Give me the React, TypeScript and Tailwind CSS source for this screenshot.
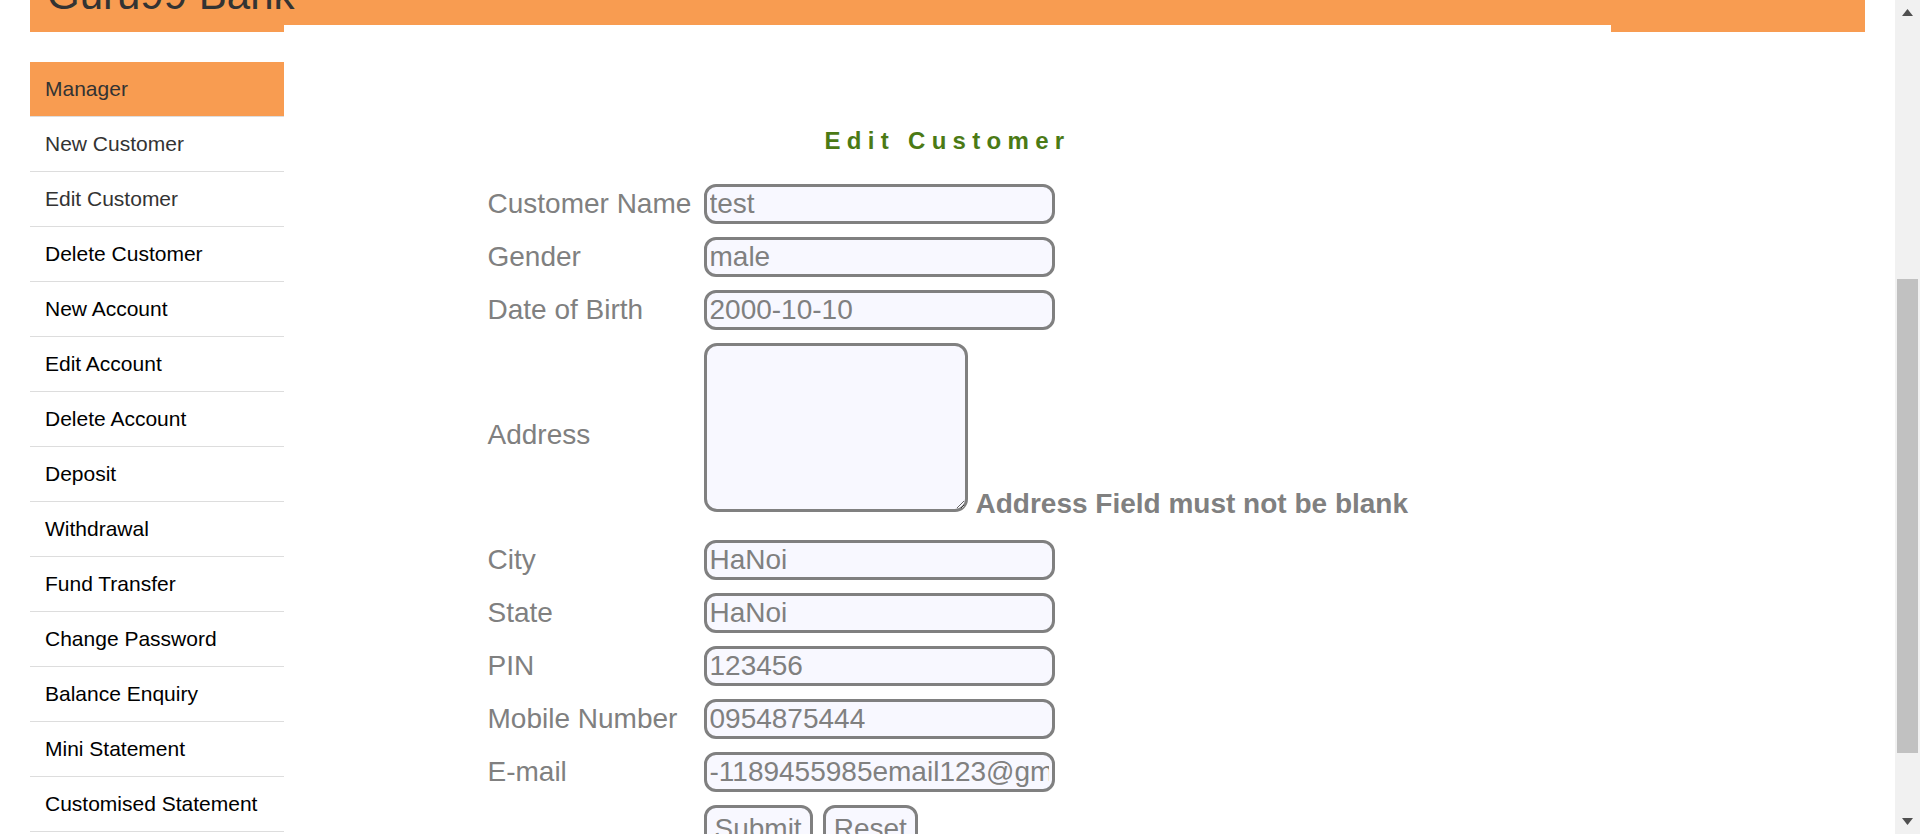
import React from "react";

const menu: { label: string; color: string }[] = [
  { label: "New Customer", color: "text-[#333333]" },
  { label: "Edit Customer", color: "text-[#333333]" },
  { label: "Delete Customer", color: "text-[#000000]" },
  { label: "New Account", color: "text-[#000000]" },
  { label: "Edit Account", color: "text-[#000000]" },
  { label: "Delete Account", color: "text-[#000000]" },
  { label: "Deposit", color: "text-[#000000]" },
  { label: "Withdrawal", color: "text-[#000000]" },
  { label: "Fund Transfer", color: "text-[#000000]" },
  { label: "Change Password", color: "text-[#000000]" },
  { label: "Balance Enquiry", color: "text-[#000000]" },
  { label: "Mini Statement", color: "text-[#000000]" },
  { label: "Customised Statement", color: "text-[#000000]" },
  { label: "Log out", color: "text-[#000000]" },
];

const fields: { label: string; value: string }[] = [
  { label: "Customer Name", value: "test" },
  { label: "Gender", value: "male" },
  { label: "Date of Birth", value: "2000-10-10" },
];

const fields2: { label: string; value: string }[] = [
  { label: "City", value: "HaNoi" },
  { label: "State", value: "HaNoi" },
  { label: "PIN", value: "123456" },
  { label: "Mobile Number", value: "0954875444" },
  { label: "E-mail", value: "-1189455985email123@gmail.com" },
];

const inputCls =
  "h-[40px] w-[351px] shrink-0 border-[3px] border-[#808080] rounded-[12px] bg-[#f8f8ff] px-[3px] text-[28px] leading-normal text-[#808080] outline-none font-['Liberation_Sans',Arial,sans-serif]";

function Row({ label, value }: { label: string; value: string }) {
  return (
    <div className="flex h-[40px]">
      <div className="w-[216px] shrink-0 flex items-center text-[28px] text-[#808080]">{label}</div>
      <input className={inputCls} defaultValue={value} />
    </div>
  );
}

export default function App() {
  return (
    <div className="flex h-[834px] w-full overflow-hidden bg-white font-['Liberation_Sans',Arial,sans-serif]">
      <div className="flex-1 px-[30px]">
        {/* header */}
        <div className="h-[25px] bg-[#f89c51] flex pl-[17px]">
          <div className="mt-[-26px] text-[42px] leading-none text-[#333333]">
            Guru99 Bank
          </div>
        </div>
        <div className="flex">
          {/* sidebar */}
          <div className="w-[254px] shrink-0">
            <div className="h-[7px] bg-[#f89c51]" />
            <div className="mt-[30px]">
              <div className="h-[54px] bg-[#f89c51] flex items-center pl-[15px] text-[21px] text-[#333333] border-b border-[#dddddd] box-content">
                Manager
              </div>
              {menu.map((m) => (
                <div
                  key={m.label}
                  className={`h-[54px] flex items-center pl-[15px] text-[21px] border-b border-[#dddddd] box-content ${m.color}`}
                >
                  {m.label}
                </div>
              ))}
            </div>
          </div>
          {/* main */}
          <div className="flex-1 bg-white pt-[102px]">
            <div className="text-center text-[24px] leading-[28px] font-bold tracking-[6.3px] text-[#4b7a15]">
              Edit Customer
            </div>
            <div className="w-[920px] mx-auto mt-[29px] flex flex-col gap-[13px]">
              {fields.map((f) => (
                <Row key={f.label} label={f.label} value={f.value} />
              ))}
              <div className="flex h-[184px]">
                <div className="w-[216px] shrink-0 flex items-center text-[28px] text-[#808080]">Address</div>
                <div className="flex items-end h-[169px] gap-[8px]">
                  <textarea className="w-[264px] h-[169px] shrink-0 border-[3px] border-[#808080] rounded-[13px] bg-[#f8f8ff] resize outline-none" />
                  <span className="mb-[-6px] text-[28px] leading-[28px] font-bold text-[#808080] whitespace-nowrap">
                    Address Field must not be blank
                  </span>
                </div>
              </div>
              {fields2.map((f) => (
                <Row key={f.label} label={f.label} value={f.value} />
              ))}
              <div className="flex h-[40px]">
                <div className="w-[216px] shrink-0" />
                <div className="flex gap-[10px]">
                  <button className="h-[40px] px-[8px] border-[3px] border-[#808080] rounded-[12px] bg-[#f8f8ff] text-[28px] leading-normal text-[#808080]">
                    Submit
                  </button>
                  <button className="h-[40px] px-[8px] border-[3px] border-[#808080] rounded-[12px] bg-[#f8f8ff] text-[28px] leading-normal text-[#808080]">
                    Reset
                  </button>
                </div>
              </div>
            </div>
          </div>
          {/* right column */}
          <div className="w-[254px] shrink-0">
            <div className="h-[7px] bg-[#f89c51]" />
          </div>
        </div>
      </div>
      {/* scrollbar */}
      <div className="w-[25px] shrink-0 bg-[#f1f1f1] flex flex-col items-center">
        <div className="h-[25px] flex items-center justify-center">
          <svg width="11" height="7" viewBox="0 0 11 7">
            <polygon points="5.5,0 11,7 0,7" fill="#505050" />
          </svg>
        </div>
        <div className="h-[254px]" />
        <div className="w-[21px] h-[474px] bg-[#c1c1c1]" />
        <div className="flex-1" />
        <div className="h-[25px] flex items-center justify-center">
          <svg width="11" height="7" viewBox="0 0 11 7">
            <polygon points="0,0 11,0 5.5,7" fill="#505050" />
          </svg>
        </div>
      </div>
    </div>
  );
}
